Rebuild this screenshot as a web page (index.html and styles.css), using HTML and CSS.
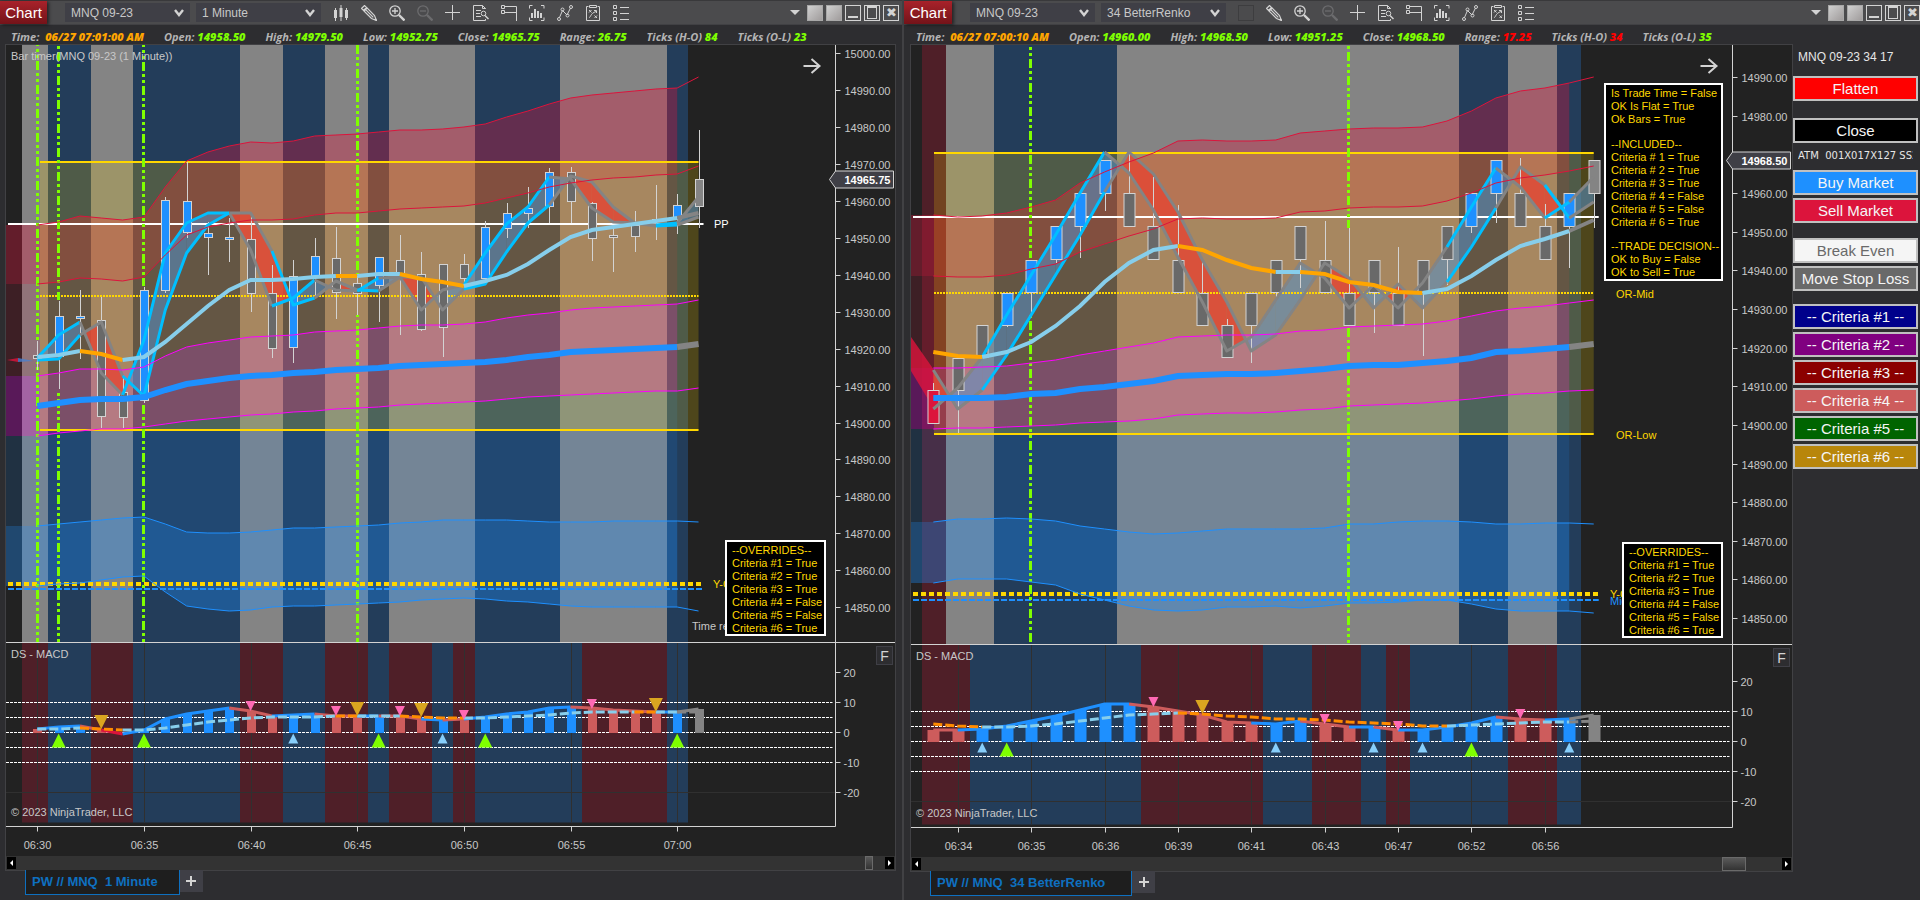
FILE: index.html
```html
<!DOCTYPE html>
<html lang="en">
<head>
    <meta charset="UTF-8">
    <meta name="viewport" content="width=device-width, initial-scale=1.0">
    <title>Chart - MNQ 09-23</title>
    <link rel="stylesheet" href="styles.css">
</head>
<body>
    <!-- Toolbar icons -->
    <svg class="icon-defs" aria-hidden="true">
        <symbol id="i-bars" viewBox="0 0 16 16"><path d="M2.5 3v13M8 0v16M13.5 3v12" stroke="currentColor" stroke-width="1"/><path d="M1 5h3v8H1zM6.5 3h3v9h-3zM12 5h3v8h-3z" fill="currentColor"/></symbol>
        <symbol id="i-pencil" viewBox="0 0 16 16"><path d="M.5 3.5l3-3 2 2-3 3zM3.2 6.2l3-3 7.3 7.3 2 5-5-2zM4.7 4.7l7.6 7.6" fill="none" stroke="currentColor" stroke-width="1.2"/><path d="M15.8 15.8l-3-1 2-2z" fill="currentColor"/></symbol>
        <symbol id="i-zoomin" viewBox="0 0 16 16"><circle cx="6" cy="6" r="5.2" fill="none" stroke="currentColor" stroke-width="1.3"/><path d="M3 6h6M6 3v6" stroke="currentColor" stroke-width="1.3"/><path d="M10 10l5.5 5.5" stroke="currentColor" stroke-width="2.4"/></symbol>
        <symbol id="i-zoomout" viewBox="0 0 16 16"><circle cx="6" cy="6" r="5.2" fill="none" stroke="currentColor" stroke-width="1.3"/><path d="M3 6h6" stroke="currentColor" stroke-width="1.3"/><path d="M10 10l5.5 5.5" stroke="currentColor" stroke-width="2.4"/></symbol>
        <symbol id="i-cross" viewBox="0 0 16 16"><path d="M0 7.5h15M7.5 0v15" stroke="currentColor"/></symbol>
        <symbol id="i-doc" viewBox="0 0 16 16"><path d="M12.5 4V3.5l-3-3H.5v15h12V14M9.500 .5v3h3M3 5.500h5M3 8.500h4M3 11.500h5" fill="none" stroke="currentColor"/><circle cx="10.500" cy="8.500" r="2.300" fill="none" stroke="currentColor"/><path d="M12 10.500l3.500 3.500" stroke="currentColor" stroke-width="1.500"/></symbol>
        <symbol id="i-trader" viewBox="0 0 16 16"><path d="M.5.5h3v3h-3zM.5 5.500h3v3h-3zM4 1.500h11.500V16M4 7.500h11.500" fill="none" stroke="currentColor"/></symbol>
        <symbol id="i-indicator" viewBox="0 0 16 16"><path d="M3.500.5h-3v3M12 .5h3v3M3.500 15.500h-3v-3M12 15.500h3v-3" fill="none" stroke="currentColor"/><path d="M3 8v5M6 4v9M9 6v7M12 8v5" stroke="currentColor" stroke-width="2"/></symbol>
        <symbol id="i-nodes" viewBox="0 0 16 16"><path d="M2.500 12.500L5.500 5.500 10 10l3.500-7" fill="none" stroke="currentColor"/><circle cx="2" cy="14" r="1.500" fill="none" stroke="currentColor"/><circle cx="5.500" cy="4.500" r="1.500" fill="none" stroke="currentColor"/><circle cx="10.500" cy="10.500" r="1.500" fill="none" stroke="currentColor"/><circle cx="14" cy="2" r="1.500" fill="none" stroke="currentColor"/></symbol>
        <symbol id="i-board" viewBox="0 0 16 16"><path d="M3.500 1.500h-2v14h13v-14h-2M4.500.5h7v2h-7zM4 5l2.500 2.500M6.500 5L4 7.500M9.500 10.500L12 13M12 10.500L9.500 13M4 12.500c2 0 1-4 7-6M9 5.500h2.500V8" fill="none" stroke="currentColor"/></symbol>
        <symbol id="i-list" viewBox="0 0 16 16"><path d="M.5.5h3v3h-3zM.5 6.500h3v3h-3zM.5 12.500h3v3h-3zM7 2.500h9M7 8.500h9M7 14.500h9" fill="none" stroke="currentColor"/></symbol>
        <symbol id="i-caret" viewBox="0 0 10 8"><path d="M1 1l4 5 4-5" fill="none" stroke="currentColor" stroke-width="2.400"/></symbol>
    </svg>

    <section class="window">
        <header class="toolbar">
            <h1 class="window-tag">Chart</h1>
            <label class="picker"><select aria-label="Instrument"><option>MNQ 09-23</option></select><svg><use href="#i-caret"/></svg></label>
            <label class="picker"><select aria-label="Interval"><option>1 Minute</option></select><svg><use href="#i-caret"/></svg></label>
            <nav class="tools">
                <button aria-label="Chart style"><svg><use href="#i-bars"/></svg></button>
                <button aria-label="Drawing tools"><svg><use href="#i-pencil"/></svg></button>
                <button aria-label="Zoom in"><svg><use href="#i-zoomin"/></svg></button>
                <button aria-label="Zoom out" disabled><svg><use href="#i-zoomout"/></svg></button>
                <button aria-label="Crosshair"><svg><use href="#i-cross"/></svg></button>
                <button aria-label="Data box"><svg><use href="#i-doc"/></svg></button>
                <button aria-label="Chart trader"><svg><use href="#i-trader"/></svg></button>
                <button aria-label="Indicators"><svg><use href="#i-indicator"/></svg></button>
                <button aria-label="Strategies"><svg><use href="#i-nodes"/></svg></button>
                <button aria-label="Strategy analyzer"><svg><use href="#i-board"/></svg></button>
                <button aria-label="Properties"><svg><use href="#i-list"/></svg></button>
            </nav>
            <div class="controls">
                <button class="drop" aria-label="More"></button>
                <button class="link-box" aria-label="Instrument link"></button>
                <button class="link-box" aria-label="Interval link"></button>
                <button class="ctl min" aria-label="Minimize"></button>
                <button class="ctl max" aria-label="Maximize"></button>
                <button class="ctl close" aria-label="Close">✖</button>
            </div>
        </header>
        <div class="bar-info">
            <span class="stamp">Time: <b class="time">06/27 07:01:00 AM</b></span>
            <span>Open: <b>14958.50</b></span>
            <span>High: <b>14979.50</b></span>
            <span>Low: <b>14952.75</b></span>
            <span>Close: <b>14965.75</b></span>
            <span>Range: <b>26.75</b></span>
            <span>Ticks (H-O) <b>84</b></span>
            <span>Ticks (O-L) <b>23</b></span>
        </div>
        <div class="frame">
            <div class="plot">
                <svg id="minute" class="chart" viewBox="6 45 889 811"></svg>
                <ul class="note overrides">
                    <li>--OVERRIDES--</li>
                    <li>Criteria #1 = True</li>
                    <li>Criteria #2 = True</li>
                    <li>Criteria #3 = True</li>
                    <li>Criteria #4 = False</li>
                    <li>Criteria #5 = False</li>
                    <li>Criteria #6 = True</li>
                </ul>
                <button class="fixed-scale">F</button>
            </div>
            <div class="scroll">
                <button class="arrow left" aria-label="Scroll left"></button>
                <div class="thumb"></div>
                <button class="arrow right" aria-label="Scroll right"></button>
            </div>
        </div>
        <footer class="tabs">
            <button class="tab">PW // MNQ&nbsp; 1 Minute</button>
            <button class="add-tab" aria-label="Add tab"></button>
        </footer>
    </section>

    <section class="window renko">
        <header class="toolbar">
            <h1 class="window-tag">Chart</h1>
            <label class="picker"><select aria-label="Instrument"><option>MNQ 09-23</option></select><svg><use href="#i-caret"/></svg></label>
            <label class="picker"><select aria-label="Interval"><option>34 BetterRenko</option></select><svg><use href="#i-caret"/></svg></label>
            <nav class="tools">
                <button class="empty" aria-label="Chart style"></button>
                <button aria-label="Drawing tools"><svg><use href="#i-pencil"/></svg></button>
                <button aria-label="Zoom in"><svg><use href="#i-zoomin"/></svg></button>
                <button aria-label="Zoom out" disabled><svg><use href="#i-zoomout"/></svg></button>
                <button aria-label="Crosshair"><svg><use href="#i-cross"/></svg></button>
                <button aria-label="Data box"><svg><use href="#i-doc"/></svg></button>
                <button aria-label="Chart trader"><svg><use href="#i-trader"/></svg></button>
                <button aria-label="Indicators"><svg><use href="#i-indicator"/></svg></button>
                <button aria-label="Strategies"><svg><use href="#i-nodes"/></svg></button>
                <button aria-label="Strategy analyzer"><svg><use href="#i-board"/></svg></button>
                <button aria-label="Properties"><svg><use href="#i-list"/></svg></button>
            </nav>
            <div class="controls">
                <button class="drop" aria-label="More"></button>
                <button class="link-box" aria-label="Instrument link"></button>
                <button class="link-box" aria-label="Interval link"></button>
                <button class="ctl min" aria-label="Minimize"></button>
                <button class="ctl max" aria-label="Maximize"></button>
                <button class="ctl close" aria-label="Close">✖</button>
            </div>
        </header>
        <div class="bar-info">
            <span class="stamp">Time: <b class="time">06/27 07:00:10 AM</b></span>
            <span>Open: <b>14960.00</b></span>
            <span>High: <b>14968.50</b></span>
            <span>Low: <b>14951.25</b></span>
            <span>Close: <b>14968.50</b></span>
            <span>Range: <b class="low">17.25</b></span>
            <span>Ticks (H-O) <b class="low">34</b></span>
            <span>Ticks (O-L) <b>35</b></span>
        </div>
        <div class="split">
            <div class="frame">
                <div class="plot">
                    <svg id="renko" class="chart" viewBox="911 45 881 812"></svg>
                    <ul class="note decision">
                        <li>Is Trade Time = False</li>
                        <li>OK Is Flat = True</li>
                        <li>Ok Bars = True</li>
                        <li></li>
                        <li>--INCLUDED--</li>
                        <li>Criteria # 1 = True</li>
                        <li>Criteria # 2 = True</li>
                        <li>Criteria # 3 = True</li>
                        <li>Criteria # 4 = False</li>
                        <li>Criteria # 5 = False</li>
                        <li>Criteria # 6 = True</li>
                        <li></li>
                        <li>--TRADE DECISION--</li>
                        <li>OK to Buy = False</li>
                        <li>OK to Sell = True</li>
                    </ul>
                    <ul class="note overrides">
                        <li>--OVERRIDES--</li>
                        <li>Criteria #1 = True</li>
                        <li>Criteria #2 = True</li>
                        <li>Criteria #3 = True</li>
                        <li>Criteria #4 = False</li>
                        <li>Criteria #5 = False</li>
                        <li>Criteria #6 = True</li>
                    </ul>
                    <button class="fixed-scale">F</button>
                </div>
                <div class="scroll">
                    <button class="arrow left" aria-label="Scroll left"></button>
                    <div class="thumb"></div>
                    <button class="arrow right" aria-label="Scroll right"></button>
                </div>
            </div>
            <aside class="trader">
                <p class="contract">MNQ 09-23 34 17</p>
                <div class="group exit"><button class="flatten">Flatten</button></div>
                <div class="group last"><button class="close-pos">Close</button></div>
                <p class="atm">ATM&nbsp; 001X017X127 SS2</p>
                <div class="group">
                    <button class="buy">Buy Market</button>
                    <button class="sell">Sell Market</button>
                </div>
                <div class="group manage">
                    <button class="even">Break Even</button>
                    <button class="stop">Move Stop Loss</button>
                </div>
                <div class="group">
                    <button class="c1">-- Criteria #1 --</button>
                    <button class="c2">-- Criteria #2 --</button>
                    <button class="c3">-- Criteria #3 --</button>
                    <button class="c4">-- Criteria #4 --</button>
                    <button class="c5">-- Criteria #5 --</button>
                    <button class="c6">-- Criteria #6 --</button>
                </div>
            </aside>
        </div>
        <footer class="tabs">
            <button class="tab">PW // MNQ&nbsp; 34 BetterRenko</button>
            <button class="add-tab" aria-label="Add tab"></button>
        </footer>
    </section>

    <script src="chart.js"></script>
</body>
</html>
```
FILE: styles.css
```css
* {
    box-sizing: border-box;
}
body {
    margin: 0;
    min-height: 100vh;
    display: grid;
    grid-template-columns: 904fr 1016fr;
    background-color: #2d2d30;
    color: #d3d3d3;
    font-family: "Liberation Sans", Arial, sans-serif;
    font-size: 11px;
    overflow: hidden;
}
button {
    font-family: inherit;
    border: none;
    padding: 0;
    margin: 0;
    background: none;
    color: inherit;
    cursor: pointer;
}
.icon-defs {
    position: absolute;
    width: 0;
    height: 0;
}
.window {
    min-width: 0;
    border-right: 2px solid #414144;
}
.window.renko {
    border-right: none;
}

/* Toolbar */
.toolbar {
    height: 25px;
    display: flex;
    align-items: center;
    background-color: #4b4b4d;
    border-top: 1px solid #39393b;
    border-bottom: 1px solid #414144;
}
.window-tag {
    width: 47px;
    height: 23px;
    margin: 0 18px 0 0;
    line-height: 23px;
    text-align: center;
    font-size: 15px;
    font-weight: normal;
    color: #ffffff;
    background: linear-gradient(#a8222a, #741319);
    box-shadow: 2px 1px 3px rgba(0, 0, 0, 0.5);
}
.renko .window-tag {
    width: 48px;
}
.picker {
    position: relative;
    width: 125px;
    margin-right: 6px;
}
.picker select {
    appearance: none;
    display: block;
    width: 100%;
    height: 19px;
    padding: 0 6px;
    border: none;
    border-radius: 0;
    background-color: #3f3f46;
    color: #c8c8c8;
    font-family: inherit;
    font-size: 12px;
}
.picker svg {
    position: absolute;
    right: 6px;
    top: 6px;
    width: 10px;
    height: 8px;
    color: #d3d3d3;
    pointer-events: none;
}
.tools {
    display: flex;
    gap: 12px;
    margin-left: 6px;
}
.tools button {
    width: 16px;
    height: 16px;
    color: #d3d3d3;
}
.tools button:disabled {
    color: #6c6c6e;
}
.tools .empty {
    border: 1px solid #3d3d3f;
}
.tools svg {
    display: block;
    width: 16px;
    height: 16px;
}
.controls {
    display: flex;
    align-items: center;
    gap: 3px;
    margin-left: auto;
    margin-right: 3px;
}
.renko .controls {
    margin-right: 0;
}
.drop {
    border: 5px solid transparent;
    border-top-color: #d3d3d3;
    border-bottom: none;
    margin-right: 4px;
}
.link-box,
.ctl {
    width: 16px;
    height: 16px;
}
.link-box {
    background: linear-gradient(135deg, #d0d0d0, #a09c9c);
    border: 1px solid #a8a8a8;
}
.ctl {
    position: relative;
    border: 1px solid #d3d3d3;
    line-height: 12px;
    font-size: 13px;
}
.min::after {
    content: "";
    display: block;
    margin: 8px 2px 0;
    border-top: 2px solid #d3d3d3;
}
.max::after {
    content: "";
    display: block;
    height: 10px;
    margin: 0 2px;
    border: 1px solid #d3d3d3;
    border-top-width: 2px;
}

/* Values of the current bar */
.bar-info {
    height: 19px;
    display: flex;
    align-items: center;
    gap: 20px;
    padding: 4px 0 0 11px;
    font-family: "Open Sans", "Noto Sans", sans-serif;
    font-size: 11px;
    line-height: 15px;
    font-style: italic;
    font-weight: bold;
    color: #b4b4b4;
    white-space: nowrap;
}
.renko .bar-info {
    padding-left: 12px;
}
.bar-info b {
    color: #7fff00;
}
.bar-info .time {
    margin-left: 3px;
    color: #ffa500;
}
.bar-info .low {
    color: #ff0000;
}

/* Chart area */
.split {
    display: flex;
}
.split .frame {
    flex: 1;
    margin-right: 0;
}
.frame {
    margin: 0 6px 0 5px;
    border: 1px solid #414144;
    background-color: #222222;
}
.renko .frame {
    margin-left: 6px;
}
.plot {
    position: relative;
}
.chart {
    display: block;
    width: 100%;
}
.chart text {
    font-size: 11px;
    fill: #c8c8c8;
}
.chart .price-tag {
    font-weight: bold;
    fill: #ffffff;
}
.chart .gold {
    fill: #ffd700;
}
.chart .blue {
    fill: #1e90ff;
}
.chart .white {
    fill: #ffffff;
}
.note {
    position: absolute;
    right: 69px;
    display: grid;
    grid-auto-rows: 1fr;
    margin: 0;
    padding: 2px 0 0 5px;
    list-style: none;
    border: 2px solid #ffffff;
    background-color: #000000;
    color: #ffd700;
    font-size: 11px;
    line-height: 13px;
    white-space: nowrap;
    overflow: hidden;
}
.overrides {
    top: 495px;
    width: 101px;
    height: 96px;
}
.renko .overrides {
    top: 497px;
}
.decision {
    top: 38px;
    width: 119px;
    height: 198px;
}
.fixed-scale {
    position: absolute;
    right: 2px;
    top: 601px;
    width: 17px;
    height: 19px;
    border: 1px solid #3f3f46;
    background-color: #2d2d30;
    font-size: 14px;
}
.renko .fixed-scale {
    top: 603px;
}
.scroll {
    display: flex;
    align-items: center;
    height: 14px;
    padding: 0 1px;
    background-color: #333333;
}
.arrow {
    width: 9px;
    height: 12px;
    background-color: #000000;
}
.arrow::after {
    content: "";
    display: block;
    width: 0;
    margin: 0 auto;
    border: 3px solid transparent;
}
.arrow.left::after {
    border-left: none;
    border-right-color: #ffffff;
}
.arrow.right::after {
    border-right: none;
    border-left-color: #ffffff;
}
.thumb {
    width: 8px;
    height: 14px;
    margin: 0 12px 0 auto;
    border: 1px solid #6a6a6a;
    background: linear-gradient(#5a5a5a, #333333);
}
.renko .thumb {
    width: 24px;
    margin-right: 36px;
}

/* Workspace tabs */
.tabs {
    display: flex;
    align-items: flex-start;
    padding-left: 25px;
    margin-top: -1px;
}
.renko .tabs {
    padding-left: 26px;
}
.tab {
    height: 25px;
    padding: 0 21px 2px 6px;
    border: 1px solid #0e70c0;
    border-top: none;
    background-color: #1e1e1e;
    color: #0e70c0;
    font-size: 13px;
    font-weight: bold;
}
.renko .tab {
    padding-right: 26px;
}
.add-tab {
    width: 23px;
    height: 22px;
    background: linear-gradient(#d3d3d3, #d3d3d3) center / 10px 2px no-repeat,
        linear-gradient(#d3d3d3, #d3d3d3) center / 2px 10px no-repeat,
        #3f3f46;
}

/* Order entry */
.trader {
    width: 127px;
    padding: 5px 2px 0 0;
    overflow: hidden;
}
.contract,
.atm {
    margin: 0 5px;
    white-space: nowrap;
    overflow: hidden;
    color: #e6e6e6;
}
.contract {
    height: 27px;
    line-height: 16px;
    font-size: 12px;
}
.atm {
    height: 27px;
    line-height: 25px;
    font-family: "DejaVu Sans", sans-serif;
    font-size: 10px;
}
.group {
    display: flex;
    flex-direction: column;
    gap: 3px;
    margin-bottom: 15px;
}
.group.exit {
    margin-bottom: 17px;
}
.group.manage {
    margin-bottom: 13px;
}
.group.last {
    margin-bottom: 0;
}
.group button {
    height: 25px;
    border: 2px solid #c0c0c0;
    color: #f5f5f5;
    font-size: 15px;
    line-height: 21px;
}
.trader .flatten { background-color: #ff0000; }
.trader .close-pos { background-color: #000000; }
.trader .buy { background-color: #1e90ff; }
.trader .sell { background-color: #dc143c; }
.trader .even { background-color: #f5f5f5; color: #696969; }
.trader .stop { background-color: #696969; }
.trader .c1 { background-color: #00008b; }
.trader .c2 { background-color: #800080; }
.trader .c3 { background-color: #8b0000; }
.trader .c4 { background-color: #cd5c5c; }
.trader .c5 { background-color: #006400; }
.trader .c6 { background-color: #b8860b; }
```
FILE: chart.js
```js
const COLORS = {
    g: '#848484', b: '#233d5a', r: '#4f1f28',
    blue: '#1e90ff', red: '#cd5c5c', crimson: '#dc143c', gray: '#848484', dim: '#696969',
    sky: '#87ceeb', orange: '#ffa500', dark: '#ff8c00', cyan: '#00bfff'
};

function drawChart(id, d) {
    const out = [];
    const x = i => d.x0 + d.step * i;
    const line = (x1, y1, x2, y2, stroke, w = 1, extra = '') =>
        out.push(`<line x1="${x1}" y1="${y1}" x2="${x2}" y2="${y2}" stroke="${stroke}" stroke-width="${w}" ${extra}/>`);
    const rect = (x1, y1, x2, y2, fill, extra = '') =>
        out.push(`<rect x="${x1}" y="${y1}" width="${x2 - x1}" height="${y2 - y1}" fill="${fill}" ${extra}/>`);
    const poly = (pts, fill, opacity = 1) =>
        out.push(`<polygon points="${pts.map(p => p.join()).join(' ')}" fill="${fill}" fill-opacity="${opacity}"/>`);
    const path = (vals, from, to, stroke, w, extra = '') => {
        const pts = [];
        for (let i = from; i <= to; i++) pts.push(x(i) + ',' + vals[i]);
        out.push(`<polyline points="${pts.join(' ')}" fill="none" stroke="${stroke}" stroke-width="${w}" ${extra}/>`);
    };
    const text = (tx, ty, s, cls = '', anchor = 'start') =>
        out.push(`<text x="${tx}" y="${ty}" class="${cls}" text-anchor="${anchor}">${s}</text>`);
    // runs: [color, last index] one after another
    const runs = (vals, list, w, extra) => {
        let from = 0;
        list.forEach(([c, to]) => { path(vals, from, to, COLORS[c], w, extra); from = to; });
    };
    const n = d.upper.length - 1;

    // Background bands
    let bx = d.bandStart;
    d.bands.forEach(([c, to]) => { rect(bx, 45, to, d.split, COLORS[c]); bx = to; });

    // Envelope zones, flat before the first bar of the session
    const zone = (a, b, fill, opacity) => {
        const pts = [[d.left, a[0]]];
        for (let i = 0; i < n; i++) pts.push([x(i), a[i]]);
        for (let i = n - 1; i >= 0; i--) pts.push([x(i), b[i]]);
        pts.push([d.left, b[0]]);
        poly(pts, fill, opacity);
    };
    zone(d.upper, d.upper2, '#dc143c', 0.35);
    zone(d.upper2, d.mag, '#dc143c', 0.15);
    zone(d.mag, d.mag2, '#ff00ff', 0.25);
    zone(d.mag2, d.low, '#1e90ff', 0.15);
    zone(d.low, d.low2, '#1e90ff', 0.35);

    // Opening range
    rect(d.or.x, d.or.top, x(n), d.or.bottom, '#ffd700', 'fill-opacity=".2"');
    d.lead.forEach(([pts, fill]) => poly(pts, fill, 0.8));

    // Fill between the fast and slow lines, cut where they cross
    for (let i = 0; i < n; i++) {
        const a = d.fast[i], b = d.slow[i], a2 = d.fast[i + 1], b2 = d.slow[i + 1];
        const piece = (pts, up) => poly(pts, up ? '#5490c8' : '#e04a35', up ? 0.55 : 0.88);
        if ((a - b) * (a2 - b2) < 0) {
            const t = (b - a) / ((a2 - a) - (b2 - b));
            const cx = x(i) + d.step * t, cy = a + (a2 - a) * t;
            piece([[x(i), a], [cx, cy], [x(i), b]], a < b);
            piece([[x(i + 1), a2], [cx, cy], [x(i + 1), b2]], a2 < b2);
        } else {
            piece([[x(i), a], [x(i + 1), a2], [x(i + 1), b2], [x(i), b]], a + a2 < b + b2);
        }
    }

    // Levels
    line(d.or.x, d.or.top, x(n), d.or.top, '#ffd700', 2);
    line(d.or.x, d.or.mid, x(n), d.or.mid, '#ffd700', 2, 'stroke-dasharray="2 1"');
    line(d.or.x, d.or.bottom, x(n), d.or.bottom, '#ffd700', 2);
    line(d.left + 2, d.pivot, x(n) + 5, d.pivot, '#ffffff', 2);
    line(d.left + 2, d.yOpen, x(n) + 5, d.yOpen, '#ffd700', 4, 'stroke-dasharray="5 3"');
    line(d.left + 2, d.yMid, x(n) + 5, d.yMid, '#1e90ff', 2, 'stroke-dasharray="6 2"');

    // Session markers
    d.sessions.forEach(([sx, y1, y2, dash]) =>
        line(sx, y1, sx, y2, '#7fff00', 3, `stroke-dasharray="9 3 3 3 3 3" stroke-dashoffset="${y1 - dash}"`));

    // Candles: high, low, top, bottom, color
    d.candles.forEach(([high, low, top, bottom, c], i) => {
        const cx = Math.round(x(i)) + 0.5;
        line(cx, high, cx, low, '#d3d3d3');
        rect(cx - d.half, top + 0.5, cx + d.half, bottom + 0.5, COLORS[c], 'stroke="#d3d3d3"');
    });

    // Averages and envelope lines
    runs(d.fast, d.ribbonRuns, 3, 'stroke-linejoin="round"');
    runs(d.slow, d.ribbonRuns, 3, 'stroke-linejoin="round"');
    [d.upper, d.upper2].forEach(v => path(v, 0, n, '#dc143c', 1));
    [d.mag, d.mag2].forEach(v => path(v, 0, n, '#ff00ff', 1));
    [d.low, d.low2].forEach(v => path(v, 0, n, '#1e90ff', 1));
    runs(d.ema, d.emaRuns, 4);
    runs(d.trend, [['blue', n - 1], ['gray', n]], 6);

    // MACD panel
    bx = d.bandStart;
    d.macdBands.forEach(([c, to]) => { rect(bx, d.split, to, d.split + 180, COLORS[c]); bx = to; });
    d.times.forEach(([i]) => line(Math.round(x(i)) + 0.5, d.split, Math.round(x(i)) + 0.5, d.split + 180, '#303030'));
    line(d.left, d.zero + 60, d.axisX, d.zero + 60, '#303030');
    [-30, -15, 0, 15, 30].forEach(v =>
        line(d.left, d.zero + v, d.axisX - 3, d.zero + v, '#ffffff', 1, 'stroke-dasharray="3 1"'));
    d.macd.forEach((y, i) => {
        if (!d.hist[i]) return;
        rect(Math.round(x(i)) - d.half, y, Math.round(x(i)) + d.half + 1, d.zero + 0.5, COLORS[d.hist[i]]);
    });
    runs(d.macd, d.macdRuns, 3);
    runs(d.signal, d.signalRuns, 3, 'stroke-dasharray="9 3"');
    d.marks.forEach(([type, i, y]) => {
        const big = type === 'buy' || type === 'sell';
        const w = big ? 7 : 5, h = big ? 14 : 10, cx = x(i);
        const fill = { buy: '#7fff00', sell: '#daa520', up: '#87cefa', down: '#ff69b4' }[type];
        if (type === 'buy' || type === 'up') {
            poly([[cx, d.zero + 1], [cx + w, d.zero + 1 + h], [cx - w, d.zero + 1 + h]], fill);
        } else {
            poly([[cx - w, y], [cx + w, y], [cx, y + h]], fill);
        }
    });

    // Axes
    line(d.left, d.split, d.right, d.split, '#d3d3d3');
    line(d.axisX, 45, d.axisX, d.axisY, '#d3d3d3');
    line(d.left, d.axisY, d.axisX, d.axisY, '#d3d3d3');
    for (let i = 0; i < d.prices; i++) {
        const y = Math.round(d.price0 + d.priceStep * i) + 0.5;
        const value = d.priceTop - 10 * i;
        line(d.axisX, y, d.axisX + 5, y, '#d3d3d3');
        if (value !== d.skip) text(d.axisX + 9, y + 4, value.toFixed(2));
    }
    [20, 10, 0, -10, -20].forEach(v => {
        const y = d.zero - v * 3;
        line(d.axisX, y, d.axisX + 5, y, '#d3d3d3');
        text(d.axisX + 8, y + 4, v);
    });
    d.times.forEach(([i, label]) => {
        const tx = Math.round(x(i)) + 0.5;
        line(tx, d.axisY, tx, d.axisY + 5, '#d3d3d3');
        text(tx, d.axisY + 22, label, '', 'middle');
    });
    const ax = d.axisX;
    out.push(`<path d="M${ax - 6} ${d.last}l6 -8.500h58v17h-58z" fill="#3f3f46" stroke="#d3d3d3"/>`);
    text(ax + 9, d.last + 4, d.lastText, 'price-tag');
    out.push(`<path d="M${ax - 32} 66h16M${ax - 24} 59l8 7-8 7" fill="none" stroke="#d3d3d3" stroke-width="2"/>`);

    d.labels.forEach(l => text(...l));
    text(d.left + 5, d.split + 15, 'DS - MACD');
    text(d.left + 5, d.axisY - 11, '© 2023 NinjaTrader, LLC');
    document.getElementById(id).innerHTML = out.join('');
}

drawChart('minute', {
    x0: 37.3, step: 21.33, half: 4, left: 6, right: 895, axisX: 835.5, axisY: 826.5, split: 642.5, zero: 732.5,
    price0: 53, priceStep: 36.95, prices: 16, priceTop: 15000, last: 179.5, lastText: '14965.75',
    bandStart: 22,
    bands: [['g', 48], ['b', 91], ['g', 133], ['b', 240], ['g', 283], ['b', 325], ['g', 368], ['b', 389], ['g', 475], ['b', 560], ['g', 667], ['b', 688]],
    or: { x: 40, top: 162, mid: 296, bottom: 430 }, pivot: 224, yOpen: 584, yMid: 589,
    upper: [225, 222, 216, 218, 220, 217, 187, 161, 152, 146, 142, 143, 141, 136, 135, 134, 132, 130, 130, 129, 127, 124, 117, 111, 104, 98, 95, 93, 91, 89, 88, 77],
    upper2: [284, 282, 278, 279, 281, 277, 255, 235, 227, 223, 220, 220, 219, 215, 213, 213, 211, 209, 208, 207, 206, 203, 198, 193, 187, 183, 180, 178, 177, 175, 174, 166],
    mag: [376, 373, 369, 369, 370, 367, 356, 347, 343, 340, 337, 336, 335, 332, 331, 330, 328, 326, 325, 325, 324, 322, 318, 315, 313, 310, 308, 307, 306, 305, 304, 300],
    mag2: [436, 433, 431, 429, 429, 427, 424, 421, 419, 417, 415, 414, 412, 411, 409, 408, 407, 405, 404, 403, 402, 401, 399, 397, 396, 395, 394, 393, 392, 391, 391, 388],
    low: [526, 524, 522, 520, 518, 517, 524, 532, 533, 533, 532, 530, 528, 528, 527, 526, 525, 523, 522, 520, 520, 520, 520, 521, 522, 522, 522, 521, 521, 521, 521, 522],
    low2: [586, 584, 583, 580, 577, 576, 592, 606, 609, 611, 610, 607, 606, 606, 605, 604, 603, 602, 600, 599, 598, 599, 601, 602, 604, 606, 607, 607, 607, 607, 607, 611],
    trend: [406, 403, 400, 399, 399, 397, 390, 384, 381, 378, 376, 375, 373, 372, 370, 369, 368, 366, 365, 364, 363, 362, 360, 357, 355, 352, 351, 350, 349, 348, 347, 344],
    ema: [357, 355, 351, 354, 360, 357, 342, 324, 306, 290, 280, 280, 279, 277, 276, 276, 274, 274, 279, 282, 286, 281, 275, 264, 250, 237, 230, 227, 224, 221, 218, 213],
    emaRuns: [['sky', 2], ['orange', 4], ['sky', 14], ['orange', 15], ['sky', 17], ['orange', 20], ['sky', 30], ['gray', 31]],
    fast: [358, 335, 322, 373, 395, 340, 253, 223, 213, 213, 250, 306, 298, 280, 290, 291, 278, 277, 310, 290, 285, 253, 224, 207, 177, 179, 208, 222, 223, 225, 223, 197],
    slow: [360, 359, 335, 322, 376, 396, 310, 253, 225, 213, 213, 251, 305, 298, 281, 290, 291, 277, 277, 310, 289, 284, 252, 223, 205, 176, 182, 207, 223, 226, 225, 217],
    ribbonRuns: [['cyan', 2], ['gray', 4], ['cyan', 9], ['gray', 11], ['cyan', 13], ['gray', 15], ['cyan', 16], ['gray', 20], ['cyan', 24], ['gray', 29], ['cyan', 30], ['gray', 31]],
    lead: [[[[7, 360], [18, 358], [18, 362]], '#dc143c'], [[[18, 358], [34, 361], [18, 362]], '#4a7fd0']],
    sessions: [[37.5, 45, 340, 61], [37.5, 362, 430, 373], [37.5, 430, 642, 446], [58.5, 45, 300, 52], [58.5, 392, 642, 399], [143.5, 45, 286, 62], [143.5, 404, 642, 405], [357.5, 45, 274, 69], [357.5, 315, 642, 326]],
    candles: [
        [341, 370, 355, 358, 'dim'], [301, 389, 316, 356, 'blue'], [290, 359, 316, 318, 'blue'], [297, 428, 320, 416, 'dim'],
        [375, 428, 392, 417, 'dim'], [287, 403, 290, 400, 'blue'], [197, 293, 200, 290, 'blue'], [162, 238, 201, 232, 'blue'],
        [222, 275, 233, 237, 'blue'], [218, 262, 237, 239, 'blue'], [217, 312, 239, 293, 'dim'], [265, 358, 293, 348, 'dim'],
        [260, 363, 276, 347, 'blue'], [238, 298, 256, 276, 'blue'], [227, 319, 258, 292, 'dim'], [276, 315, 283, 293, 'dim'],
        [257, 322, 257, 285, 'blue'], [235, 335, 260, 274, 'dim'], [252, 331, 274, 329, 'dim'], [264, 357, 264, 327, 'dim'],
        [254, 286, 264, 278, 'dim'], [221, 281, 227, 278, 'blue'], [203, 238, 213, 228, 'blue'], [187, 228, 208, 213, 'blue'],
        [168, 223, 172, 206, 'blue'], [167, 223, 172, 201, 'dim'], [202, 261, 203, 238, 'dim'], [225, 272, 235, 237, 'dim'],
        [211, 252, 225, 236, 'dim'], [185, 240, 219, 220, 'dim'], [194, 234, 205, 219, 'blue'], [130, 228, 179, 206, 'gray']
    ],
    macdBands: [['r', 48], ['b', 91], ['r', 133], ['b', 240], ['r', 283], ['b', 325], ['r', 368], ['b', 389], ['r', 432], ['b', 453], ['r', 475], ['b', 582], ['r', 667], ['b', 688]],
    macd: [729, 727, 726, 730, 734, 730, 719, 714, 711, 708, 711, 716, 715, 714, 716, 716, 716, 716, 719, 720, 719, 717, 714, 712, 708, 707, 708, 710, 711, 712, 712, 709],
    hist: ['red', 'blue', 'blue', 'red', '', 'blue', 'blue', 'blue', 'blue', 'blue', 'red', 'red', 'blue', 'blue', 'red', 'red', 'blue', 'red', 'red', 'blue', 'red', 'blue', 'blue', 'blue', 'blue', 'blue', 'red', 'red', 'red', 'red', 'blue', 'gray'],
    macdRuns: [['blue', 2], ['red', 3], ['crimson', 4], ['blue', 9], ['red', 11], ['blue', 13], ['red', 15], ['blue', 16], ['red', 18], ['blue', 19], ['red', 20], ['blue', 25], ['red', 29], ['blue', 30], ['gray', 31]],
    signal: [729, 729, 728, 729, 730, 730, 728, 725, 722, 720, 718, 717, 717, 717, 716, 716, 716, 716, 717, 718, 718, 718, 717, 716, 715, 713, 712, 712, 712, 712, 712, 712],
    signalRuns: [['sky', 2], ['dark', 4], ['sky', 14], ['dark', 15], ['sky', 17], ['dark', 20], ['sky', 28], ['dark', 29], ['sky', 30], ['gray', 31]],
    marks: [['buy', 1], ['sell', 3, 715], ['buy', 5], ['down', 10, 701], ['up', 12], ['down', 14, 706], ['sell', 15, 702], ['buy', 16], ['down', 17, 706], ['sell', 18, 703], ['up', 19], ['down', 20, 710], ['buy', 21], ['down', 26, 699], ['sell', 29, 698], ['buy', 30]],
    times: [[0, '06:30'], [5, '06:35'], [10, '06:40'], [15, '06:45'], [20, '06:50'], [25, '06:55'], [30, '07:00']],
    labels: [[11, 60, 'Bar timer(MNQ 09-23 (1 Minute))'], [714, 228, 'PP', 'white'], [713, 588, 'Y-O', 'gold'], [692, 630, 'Time re']]
});

drawChart('renko', {
    x0: 933.3, step: 24.46, half: 5.5, left: 911, right: 1792, axisX: 1732.5, axisY: 827.5, split: 644.5, zero: 741.5,
    price0: 77, priceStep: 38.65, prices: 15, priceTop: 14990, skip: 14970, last: 160.5, lastText: '14968.50',
    bandStart: 922,
    bands: [['r', 946], ['g', 994], ['b', 1117], ['g', 1459], ['b', 1508], ['g', 1557], ['b', 1581]],
    or: { x: 934, top: 153, mid: 293, bottom: 434 }, pivot: 217, yOpen: 594, yMid: 600,
    upper: [215, 217, 216, 213, 207, 200, 183, 172, 162, 153, 141, 140, 141, 141, 140, 133, 131, 129, 128, 128, 127, 121, 111, 98, 91, 88, 83, 77],
    upper2: [276, 277, 277, 275, 269, 264, 252, 244, 236, 229, 219, 218, 219, 219, 218, 212, 211, 208, 207, 207, 206, 201, 193, 183, 178, 175, 171, 166],
    mag: [368, 368, 367, 366, 363, 360, 355, 351, 347, 343, 337, 336, 335, 335, 334, 331, 330, 327, 326, 325, 324, 321, 316, 311, 308, 306, 303, 300],
    mag2: [429, 428, 428, 427, 426, 425, 423, 422, 421, 419, 415, 414, 413, 413, 412, 410, 409, 406, 405, 404, 403, 401, 399, 396, 394, 393, 391, 390],
    low: [522, 519, 519, 518, 519, 521, 526, 529, 532, 534, 533, 531, 529, 529, 529, 529, 528, 524, 524, 522, 521, 521, 522, 524, 524, 523, 523, 524],
    low2: [583, 579, 579, 579, 582, 585, 594, 600, 606, 610, 611, 610, 607, 607, 606, 608, 606, 603, 603, 602, 600, 600, 604, 609, 611, 611, 611, 613],
    trend: [398, 398, 398, 397, 394, 393, 389, 387, 384, 381, 376, 375, 374, 374, 373, 371, 369, 366, 365, 365, 363, 361, 358, 352, 351, 349, 347, 344],
    ema: [352, 356, 357, 352, 342, 326, 306, 282, 263, 250, 246, 250, 260, 268, 272, 272, 274, 282, 285, 292, 293, 289, 276, 260, 246, 239, 231, 220],
    emaRuns: [['orange', 2], ['sky', 10], ['orange', 14], ['sky', 15], ['orange', 20], ['sky', 26], ['gray', 27]],
    fast: [409, 388, 357, 315, 275, 235, 193, 152, 173, 210, 257, 302, 351, 337, 300, 263, 278, 308, 285, 308, 283, 247, 207, 168, 187, 218, 202, 177],
    slow: [370, 409, 390, 355, 315, 275, 235, 192, 152, 174, 212, 260, 302, 351, 335, 300, 263, 278, 308, 284, 308, 282, 247, 208, 167, 185, 218, 202],
    ribbonRuns: [['gray', 2], ['cyan', 7], ['gray', 21], ['cyan', 23], ['gray', 25], ['cyan', 26], ['gray', 27]],
    lead: [[[[911, 337], [934, 370], [934, 409], [911, 371]], '#dc143c']],
    sessions: [[1030.5, 45, 258, 59], [1030.5, 315, 643, 321], [1348.5, 45, 228, 52], [1348.5, 326, 643, 328]],
    candles: [
        [383, 424, 390, 423, 'crimson'], [358, 433, 358, 390, 'dim'], [325, 357, 325, 357, 'dim'], [293, 327, 293, 325, 'blue'],
        [260, 313, 260, 292, 'blue'], [226, 263, 226, 259, 'blue'], [193, 258, 193, 226, 'blue'], [160, 211, 160, 193, 'blue'],
        [153, 226, 193, 226, 'dim'], [177, 259, 226, 259, 'dim'], [205, 292, 260, 292, 'dim'], [261, 325, 293, 325, 'dim'],
        [319, 357, 325, 357, 'dim'], [293, 363, 293, 325, 'dim'], [260, 301, 260, 292, 'dim'], [226, 288, 226, 259, 'dim'],
        [221, 292, 260, 292, 'dim'], [228, 325, 293, 325, 'dim'], [260, 333, 260, 292, 'dim'], [247, 325, 293, 325, 'dim'],
        [260, 356, 260, 292, 'dim'], [226, 285, 226, 259, 'dim'], [193, 233, 193, 226, 'blue'], [160, 223, 160, 193, 'blue'],
        [158, 226, 193, 226, 'dim'], [204, 259, 226, 259, 'dim'], [193, 268, 193, 226, 'blue'], [160, 228, 160, 193, 'gray']
    ],
    macdBands: [['r', 970], ['b', 1141], ['r', 1263], ['b', 1312], ['r', 1361], ['b', 1386], ['r', 1410], ['b', 1508], ['r', 1557], ['b', 1581]],
    macd: [730, 730, 729, 726, 721, 716, 710, 704, 704, 707, 711, 715, 722, 723, 724, 721, 724, 727, 727, 730, 730, 727, 723, 717, 719, 720, 719, 715],
    hist: ['red', 'red', 'blue', 'blue', 'blue', 'blue', 'blue', 'blue', 'blue', 'red', 'red', 'red', 'red', 'red', 'blue', 'blue', 'red', 'red', 'blue', 'red', 'blue', 'blue', 'blue', 'blue', 'red', 'red', 'blue', 'gray'],
    macdRuns: [['red', 1], ['blue', 8], ['red', 13], ['blue', 15], ['red', 17], ['blue', 18], ['red', 19], ['blue', 23], ['red', 25], ['blue', 26], ['gray', 27]],
    signal: [724, 726, 727, 727, 726, 724, 721, 718, 715, 714, 713, 714, 716, 717, 719, 719, 720, 722, 723, 724, 726, 726, 725, 724, 723, 722, 722, 721],
    signalRuns: [['dark', 2], ['sky', 10], ['dark', 21], ['sky', 26], ['gray', 27]],
    marks: [['up', 2], ['buy', 3], ['down', 9, 697], ['sell', 11, 700], ['up', 14], ['down', 16, 714], ['up', 18], ['down', 19, 721], ['up', 20], ['buy', 22], ['down', 24, 709], ['up', 26]],
    times: [[1, '06:34'], [4, '06:35'], [7, '06:36'], [10, '06:39'], [13, '06:41'], [16, '06:43'], [19, '06:47'], [22, '06:52'], [25, '06:56']],
    labels: [[1616, 298, 'OR-Mid', 'gold'], [1616, 439, 'OR-Low', 'gold'], [1610, 598, 'Y-O', 'gold'], [1610, 605, 'Mid', 'blue']]
});
```
